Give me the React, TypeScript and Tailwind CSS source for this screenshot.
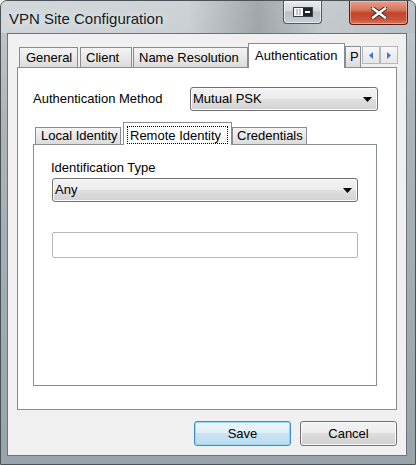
import type { ReactNode } from "react";

type TabProps = {
  children: ReactNode;
  className?: string;
};

// unselected tab, sits on the panel's top border
const Tab = ({ children, className = "" }: TabProps) => (
  <div
    className={`flex shrink-0 items-center overflow-hidden whitespace-nowrap border border-b-0 border-[#898c95] bg-[linear-gradient(#f4f4f4,#e6e6e6_60%,#dcdcdc)] ${className}`}
  >
    {children}
  </div>
);

const DropArrow = () => (
  <svg width="9" height="5" viewBox="0 0 9 5" className="shrink-0">
    <polygon points="0,0 9,0 4.5,5" fill="#000" />
  </svg>
);

const Combo = ({ value, className = "" }: { value: string; className?: string }) => (
  <div
    className={`flex items-center justify-between rounded-[3px] border border-[#707070] bg-[linear-gradient(#f3f3f3,#ececec_50%,#dfdfdf_50%,#d2d2d2)] pl-[2px] pr-[5px] shadow-[inset_0_0_0_1px_#fbfbfb] ${className}`}
  >
    <span>{value}</span>
    <DropArrow />
  </div>
);

const ScrollArrow = ({ dir }: { dir: "left" | "right" }) => (
  <div className="flex h-[18px] w-[18px] items-center justify-center border border-[#b4b8bc] bg-[linear-gradient(#f7f7f7,#e6e6e6)]">
    <svg width="4" height="7" viewBox="0 0 4 7">
      <polygon points={dir === "left" ? "4,0 4,7 0,3.5" : "0,0 0,7 4,3.5"} fill="#3f78c8" />
    </svg>
  </div>
);

const App = () => {
  return (
    <div className="flex h-[465px] w-[416px] flex-col overflow-hidden rounded-t-[7px] border border-[#4a5258] bg-[linear-gradient(180deg,#c5cbcf,#adb5ba_25%,#a3acb2_60%,#9aa3a9)] font-['Liberation_Sans',Arial,sans-serif] text-[13px] text-black">
      {/* title bar */}
      <div className="flex h-[32px] shrink-0 items-start bg-[linear-gradient(90deg,rgba(220,224,227,0.6),rgba(214,218,221,0.5)_45%,rgba(120,126,130,0.45)_62%,rgba(200,205,208,0.4)_78%,rgba(170,178,183,0.3))]">
        <span className="pl-[8px] pt-[10px] text-[15px] leading-[15px] text-[#141b26] [text-shadow:0_0_8px_rgba(255,255,255,0.95)]">
          VPN Site Configuration
        </span>
        <div className="ml-auto flex h-[23px] w-[39px] items-center justify-center rounded-b-[4px] border border-t-0 border-[#4f5960] bg-[linear-gradient(#e9ecee,#d3d8dc_45%,#b8c0c6_50%,#c9d0d5)] shadow-[inset_0_0_0_1px_rgba(255,255,255,0.55)]">
          <svg width="20" height="10" viewBox="0 0 20 10">
            <rect x="0.5" y="0.5" width="19" height="9" fill="#f4f6f7" stroke="#39434b" />
            <line x1="4" y1="2" x2="4" y2="8" stroke="#8a949b" />
            <line x1="7" y1="2" x2="7" y2="8" stroke="#8a949b" />
            <rect x="10" y="1" width="9" height="8" fill="#1d252b" />
            <rect x="12" y="4" width="5" height="2" fill="#ffffff" />
          </svg>
        </div>
        <div className="ml-[27px] mr-[7px] flex h-[24px] w-[59px] items-center justify-center rounded-b-[4px] border border-t-0 border-[#5a1b12] bg-[linear-gradient(#e8a08c,#d4735a_40%,#c2452a_52%,#c9533a_80%,#d9775f)] shadow-[inset_0_0_0_1px_rgba(255,210,200,0.5)]">
          <svg width="16" height="12" viewBox="0 0 16 12">
            <path d="M2 1.5 L14 10.5 M14 1.5 L2 10.5" stroke="#3b2a28" strokeWidth="4.2" strokeLinecap="square" />
            <path d="M2 1.5 L14 10.5 M14 1.5 L2 10.5" stroke="#ffffff" strokeWidth="2.4" strokeLinecap="square" />
          </svg>
        </div>
      </div>

      {/* client area */}
      <div className="ml-[6px] flex h-[423px] w-[400px] flex-col border border-[#6b747a] bg-[#f0f0f0] pl-[9px] pt-[9px]">
        {/* outer tab strip */}
        <div className="relative flex h-[24px] w-[380px] items-end">
          <Tab className="ml-[2px] h-[20px] w-[59px] pl-[6px]">General</Tab>
          <Tab className="ml-[2px] h-[20px] w-[52px] pl-[5px]">Client</Tab>
          <Tab className="ml-[1px] h-[20px] w-[115px] pl-[5px]">Name Resolution</Tab>
          <div className="relative z-10 -mb-px flex h-[25px] w-[97px] shrink-0 items-center border border-b-0 border-[#898c95] bg-white pl-[6px]">
            Authentication
          </div>
          <Tab className="h-[21px] w-[16px] pl-[4px]">P</Tab>
          <div className="absolute right-[-1px] top-[3px] flex">
            <ScrollArrow dir="left" />
            <ScrollArrow dir="right" />
          </div>
        </div>

        {/* outer panel */}
        <div className="h-[343px] w-[380px] border border-[#898c95] bg-white pl-[15px] pt-[19px]">
          <div className="flex items-center">
            <span className="w-[157px]">Authentication Method</span>
            <Combo value="Mutual PSK" className="h-[24px] w-[188px]" />
          </div>

          {/* inner tab strip */}
          <div className="mt-[11px] flex h-[22px] items-end">
            <Tab className="ml-[2px] h-[17px] w-[86px] pl-[5px]">Local Identity</Tab>
            <div className="relative z-10 -mb-px ml-[2px] flex h-[23px] w-[109px] shrink-0 items-stretch border border-b-0 border-[#898c95] bg-white p-[3px] pb-[1px]">
              <span className="flex flex-1 items-center border border-dotted border-black pl-[2px] leading-none">
                Remote Identity
              </span>
            </div>
            <Tab className="h-[17px] w-[75px] pl-[4px]">Credentials</Tab>
          </div>

          {/* inner panel */}
          <div className="h-[242px] w-[344px] border border-[#898c95] bg-white pt-[15px]">
            <div className="pl-[17px] leading-[15px]">Identification Type</div>
            <Combo value="Any" className="ml-[18px] mt-[3px] h-[24px] w-[306px]" />
            <div className="ml-[18px] mt-[30px] h-[26px] w-[306px] rounded-[2px] border border-[#b5b8bc] bg-white" />
          </div>
        </div>

        {/* buttons */}
        <div className="mt-[11px] flex w-[380px] justify-end gap-[9px]">
          <button
            type="button"
            className="h-[25px] w-[97px] rounded-[3px] border border-[#3c8fcc] bg-[linear-gradient(#eff7fc,#deeef8_50%,#cbe4f3_50%,#bddbee)] shadow-[inset_0_0_0_1px_#96d9f6]"
          >
            Save
          </button>
          <button
            type="button"
            className="h-[25px] w-[97px] rounded-[3px] border border-[#707070] bg-[linear-gradient(#f3f3f3,#ececec_50%,#dddddd_50%,#d0d0d0)] shadow-[inset_0_0_0_1px_#fcfcfc]"
          >
            Cancel
          </button>
        </div>
      </div>
    </div>
  );
};

export default App;
